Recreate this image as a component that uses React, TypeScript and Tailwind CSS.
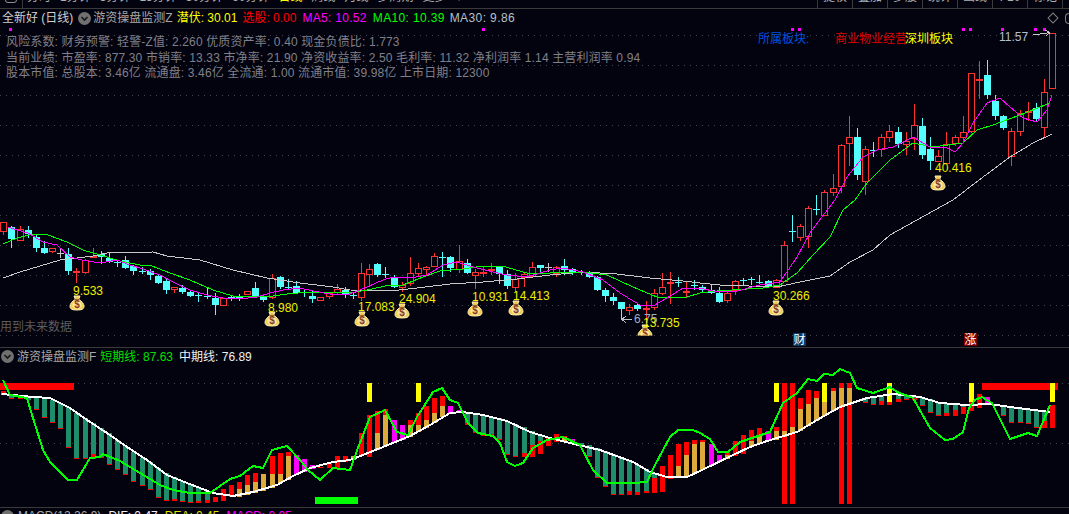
import React from "react"

// candle: [body top, body bottom, high, low, colour]  (page pixels)
type Candle = [number, number, number, number, "r" | "c" | "w"]

const candles: Candle[] = [
  [222, 231, 222, 235, "r"], [227, 239, 226, 248, "c"], [229, 240, 226, 241, "r"], [230, 234, 226, 238, "c"],
  [237, 248, 235, 252, "c"], [248, 253, 241, 254, "c"], [248, 251, 248, 253, "r"], [253, 253, 248, 258, "w"],
  [254, 271, 248, 275, "c"], [271, 271, 268, 283, "r"], [260, 272, 259, 274, "r"], [256, 257, 248, 258, "r"],
  [254, 257, 251, 264, "c"], [258, 262, 253, 263, "c"], [262, 262, 260, 267, "c"], [260, 268, 256, 269, "c"],
  [266, 271, 265, 275, "c"], [271, 271, 267, 274, "c"], [271, 275, 269, 280, "c"], [276, 283, 275, 284, "c"],
  [281, 290, 279, 294, "c"], [287, 289, 287, 293, "r"], [288, 292, 285, 294, "c"], [292, 296, 290, 297, "c"],
  [295, 295, 292, 302, "c"], [296, 296, 287, 299, "c"], [298, 305, 293, 315, "c"], [298, 305, 298, 305, "r"],
  [297, 297, 296, 301, "c"], [297, 298, 294, 301, "c"], [291, 294, 291, 294, "r"], [288, 297, 282, 298, "c"],
  [297, 300, 295, 302, "c"], [278, 297, 274, 299, "r"], [277, 287, 276, 289, "c"], [287, 287, 279, 289, "c"],
  [286, 293, 281, 294, "c"], [292, 292, 289, 297, "c"], [296, 299, 290, 303, "c"], [297, 300, 297, 300, "r"],
  [293, 296, 293, 299, "r"], [289, 292, 284, 295, "r"], [290, 295, 287, 298, "c"], [295, 295, 292, 299, "c"],
  [273, 297, 263, 301, "r"], [269, 274, 264, 287, "r"], [264, 275, 263, 277, "c"], [274, 274, 267, 278, "c"],
  [277, 287, 275, 288, "c"], [285, 287, 282, 292, "r"], [273, 283, 257, 286, "r"], [268, 273, 263, 277, "r"],
  [267, 269, 266, 275, "r"], [256, 266, 253, 267, "r"], [257, 257, 252, 277, "c"], [257, 268, 256, 272, "c"],
  [261, 269, 245, 273, "r"], [263, 273, 259, 274, "c"], [272, 275, 269, 289, "r"], [272, 272, 267, 277, "r"],
  [269, 269, 263, 275, "r"], [267, 274, 266, 284, "c"], [274, 286, 270, 289, "c"], [279, 287, 273, 292, "r"],
  [274, 277, 273, 287, "r"], [267, 276, 262, 277, "r"], [265, 268, 265, 272, "c"], [267, 267, 263, 272, "w"],
  [267, 273, 266, 277, "r"], [266, 270, 259, 275, "c"], [269, 273, 268, 275, "c"], [272, 272, 270, 275, "c"],
  [272, 277, 271, 278, "c"], [277, 290, 276, 291, "c"], [290, 296, 288, 302, "c"], [297, 301, 293, 305, "c"],
  [302, 309, 302, 320, "c"], [307, 310, 304, 315, "r"], [305, 309, 303, 311, "c"], [308, 308, 301, 320, "r"],
  [293, 307, 289, 310, "r"], [287, 293, 273, 295, "r"], [282, 282, 272, 304, "r"], [282, 282, 277, 287, "c"],
  [291, 291, 282, 297, "r"], [285, 285, 280, 290, "c"], [287, 290, 285, 292, "c"], [290, 293, 285, 294, "c"],
  [293, 302, 287, 303, "c"], [293, 300, 291, 303, "r"], [281, 290, 280, 295, "r"], [280, 280, 278, 286, "c"],
  [279, 279, 277, 285, "c"], [282, 282, 275, 284, "c"], [281, 287, 280, 287, "c"], [280, 287, 279, 288, "r"],
  [245, 281, 241, 282, "r"], [231, 231, 215, 242, "c"], [226, 237, 224, 241, "r"], [208, 236, 206, 248, "r"],
  [209, 209, 195, 215, "c"], [192, 215, 190, 216, "r"], [188, 192, 174, 196, "r"], [145, 186, 144, 193, "r"],
  [137, 143, 116, 166, "r"], [137, 175, 128, 180, "c"], [149, 181, 146, 195, "r"], [150, 150, 142, 157, "c"],
  [137, 149, 134, 157, "r"], [131, 137, 125, 142, "r"], [132, 144, 127, 148, "c"], [141, 144, 132, 155, "r"],
  [125, 138, 104, 150, "r"], [126, 155, 118, 159, "c"], [149, 161, 137, 170, "c"], [156, 161, 150, 162, "r"],
  [144, 163, 132, 164, "r"], [137, 143, 135, 146, "r"], [132, 137, 116, 143, "r"], [73, 131, 73, 133, "r"],
  [79, 79, 61, 99, "r"], [75, 95, 60, 99, "c"], [101, 116, 95, 120, "c"], [116, 128, 115, 130, "c"],
  [131, 156, 128, 166, "r"], [113, 131, 110, 136, "r"], [111, 111, 102, 121, "r"], [108, 119, 103, 121, "c"],
  [92, 127, 79, 138, "r"], [33, 88, 33, 88, "r"],
]

// sub chart bars: [top, bottom, colour] segments for each day
type Seg = [number, number, "g" | "r" | "o" | "m" | "y"]

const bars: Seg[][] = [
  [[391, 393, "r"], [393, 395, "o"]], [[395, 398, "g"], [398, 399, "r"]], [[396, 398, "g"], [398, 399, "r"]], [[397, 400, "g"]],
  [[397, 409, "g"], [409, 410, "r"]], [[398, 417, "g"], [417, 418, "r"]], [[400, 422, "g"], [422, 423, "r"]], [[403, 428, "g"], [428, 429, "r"]],
  [[407, 447, "g"], [447, 448, "r"]], [[413, 458, "g"], [458, 459, "r"]], [[418, 458, "g"], [458, 459, "r"]], [[423, 454, "g"], [454, 459, "r"]],
  [[428, 457, "g"], [457, 458, "r"]], [[433, 464, "g"], [464, 465, "r"]], [[440, 469, "g"], [469, 470, "r"]], [[446, 474, "g"], [474, 475, "r"]],
  [[452, 481, "g"], [481, 482, "r"]], [[458, 485, "g"], [485, 486, "r"]], [[462, 489, "g"], [489, 490, "r"]], [[468, 497, "g"], [497, 498, "r"]],
  [[473, 500, "g"], [500, 501, "r"]], [[477, 499, "g"], [499, 501, "r"]], [[481, 501, "g"], [501, 502, "r"]], [[484, 502, "g"], [502, 503, "r"]],
  [[488, 501, "g"], [501, 503, "r"]], [[491, 500, "g"], [500, 503, "r"]], [[497, 502, "r"]], [[489, 501, "r"]],
  [[485, 497, "r"]], [[482, 489, "r"], [489, 497, "o"]], [[475, 485, "r"], [485, 495, "o"]], [[473, 482, "r"], [482, 493, "o"]],
  [[474, 491, "o"]], [[456, 474, "r"], [474, 488, "o"]], [[453, 474, "r"], [474, 483, "o"]], [[452, 456, "r"], [456, 480, "o"]],
  [[455, 475, "m"]], [[459, 472, "m"]], [[465, 469, "m"]], [[467, 468, "r"]],
  [[462, 468, "r"]], [[456, 468, "r"]], [[456, 462, "r"]], [[456, 460, "o"]],
  [[433, 456, "r"]], [[383, 402, "y"], [415, 457, "r"]], [[411, 433, "r"], [433, 450, "o"]], [[409, 415, "r"], [415, 446, "o"]],
  [[420, 443, "m"]], [[425, 440, "m"]], [[420, 425, "r"], [425, 437, "o"]], [[383, 402, "y"], [413, 425, "r"], [425, 432, "o"]],
  [[406, 420, "r"], [420, 428, "o"]], [[398, 413, "r"], [413, 423, "o"]], [[396, 406, "r"], [406, 417, "o"]], [[406, 414, "m"]],
  [[410, 412, "m"]], [[412, 423, "g"], [423, 425, "r"]], [[413, 432, "g"], [432, 433, "r"]], [[416, 435, "g"], [435, 436, "r"]],
  [[417, 434, "g"], [434, 436, "r"]], [[418, 439, "g"], [439, 440, "r"]], [[421, 454, "g"], [454, 455, "r"]], [[424, 456, "g"], [456, 457, "r"]],
  [[427, 453, "g"], [453, 457, "r"]], [[431, 445, "g"], [445, 457, "r"]], [[436, 441, "g"], [441, 454, "r"]], [[437, 446, "r"]],
  [[434, 442, "r"]], [[436, 437, "r"], [437, 442, "o"]], [[439, 443, "m"]], [[443, 446, "g"], [446, 447, "r"]],
  [[445, 456, "g"], [456, 457, "r"]], [[448, 477, "g"], [477, 478, "r"]], [[451, 486, "g"], [486, 487, "r"]], [[454, 494, "g"], [494, 495, "r"]],
  [[457, 494, "g"], [494, 495, "r"]], [[461, 491, "g"], [491, 495, "r"]], [[465, 492, "g"], [492, 495, "r"]], [[469, 491, "g"], [491, 493, "r"]],
  [[473, 478, "g"], [478, 493, "r"]], [[466, 492, "r"]], [[455, 479, "r"]], [[444, 466, "r"], [466, 478, "o"]],
  [[442, 455, "r"], [455, 477, "o"]], [[440, 444, "r"], [444, 474, "o"]], [[440, 442, "r"], [442, 470, "o"]], [[444, 466, "m"]],
  [[455, 462, "m"]], [[453, 455, "r"], [455, 459, "o"]], [[441, 456, "r"]], [[435, 454, "r"]],
  [[430, 441, "r"], [441, 447, "o"]], [[428, 435, "r"], [435, 443, "o"]], [[431, 441, "m"]], [[383, 402, "y"], [427, 431, "r"], [431, 440, "o"]],
  [[383, 431, "r"], [431, 437, "o"], [437, 504, "r"]], [[383, 427, "r"], [427, 434, "o"], [434, 504, "r"]], [[398, 409, "r"], [409, 431, "o"]], [[390, 404, "r"], [404, 426, "o"]],
  [[391, 398, "r"], [398, 421, "o"]], [[383, 402, "y"], [402, 416, "o"]], [[388, 391, "r"], [391, 411, "o"]], [[383, 388, "r"], [388, 406, "o"], [406, 504, "r"]],
  [[383, 388, "r"], [388, 403, "o"], [403, 504, "r"]], [[401, 402, "r"]], [[398, 402, "g"], [402, 403, "r"]], [[396, 404, "g"], [404, 405, "r"]],
  [[395, 401, "g"], [401, 405, "r"]], [[383, 402, "y"], [402, 405, "r"]], [[394, 399, "g"], [399, 402, "r"]], [[395, 399, "g"], [399, 400, "r"]],
  [[396, 398, "g"], [398, 400, "r"]], [[397, 405, "g"], [405, 406, "r"]], [[399, 412, "g"], [412, 413, "r"]], [[402, 415, "g"], [415, 416, "r"]],
  [[404, 413, "g"], [413, 416, "r"]], [[405, 410, "g"], [410, 416, "r"]], [[405, 407, "g"], [407, 414, "r"]], [[383, 402, "y"], [402, 411, "r"]],
  [[394, 408, "r"]], [[397, 405, "m"]], [[404, 405, "m"]], [[405, 415, "g"], [415, 416, "r"]],
  [[408, 422, "g"], [422, 423, "r"]], [[409, 422, "g"], [422, 423, "r"]], [[410, 423, "g"], [423, 424, "r"]], [[411, 427, "g"], [427, 428, "r"]],
  [[412, 421, "g"], [421, 428, "r"]], [[383, 402, "y"], [405, 428, "r"]],
]

const segColor = { g: "#1f8c6a", r: "#ff0000", o: "#dcab3c", m: "#ff00ff", y: "#ffff00" }

const ma5 = "8,227 17,230 28,233 43,242 57,245 70,257 82,260 100,263 117,260 130,265 143,269 160,275 173,282 190,290 207,295 223,298 240,299 257,297 270,293 283,290 300,288 313,291 330,294 347,295 360,290 383,280 393,277 410,278 427,275 443,265 457,262 473,267 493,272 507,275 527,277 550,270 563,268 583,272 603,280 620,293 640,305 653,306 667,298 683,288 700,288 717,292 737,291 760,285 780,282 797,257 810,233 825,213 835,200 847,177 863,157 877,150 893,147 913,137 930,147 947,148 955,152 963,143 973,123 987,103 1000,98 1010,107 1023,118 1037,122 1047,110 1052,95"
const ma10 = "3,244 17,238 33,234 48,235 67,242 83,250 100,255 120,261 140,265 152,266 170,273 190,280 213,290 233,296 253,297 273,296 287,294 310,292 333,292 350,293 367,290 390,285 403,285 423,277 440,271 463,269 482,266 502,266 527,273 550,273 583,272 607,275 633,287 657,297 687,297 700,293 717,291 763,288 780,285 797,273 813,255 830,237 843,210 855,200 867,183 890,160 913,143 933,147 963,143 977,130 993,125 1020,115 1050,103"
const ma30 = "3,278 20,272 40,266 60,260 77,258 93,256 107,253 153,252 167,256 200,260 233,270 267,278 300,283 333,287 350,290 390,291 417,288 450,284 483,282 517,279 550,275 583,272 617,274 650,278 683,281 700,283 720,285 777,287 800,282 830,276 850,262 873,250 890,235 917,220 953,200 983,177 1010,157 1033,143 1052,134"
const whiteLine = "2,394 33,397 50,398 70,408 87,420 107,433 127,447 147,460 167,475 187,483 213,493 233,496 253,492 277,485 293,476 310,468 333,462 350,460 383,447 410,436 430,425 450,413 463,412 483,415 507,421 530,432 550,438 570,443 600,450 633,462 650,472 667,477 687,477 700,471 733,455 750,447 767,441 797,432 817,420 840,407 867,398 893,394 920,397 940,403 967,405 990,404 1010,407 1050,412"
const greenLine = "3,380 10,395 27,398 33,418 43,450 50,462 68,480 77,480 90,458 100,457 103,454 120,461 140,473 160,485 173,490 190,493 210,493 230,479 240,476 253,466 263,468 272,450 287,446 300,460 308,470 320,480 333,468 350,470 358,448 370,417 385,410 397,432 408,435 417,417 433,392 442,388 450,400 458,403 468,423 478,433 493,436 500,443 507,462 515,466 523,463 533,448 547,440 563,437 580,445 593,470 607,483 633,483 647,482 655,465 670,437 678,430 693,430 700,433 710,439 718,452 728,452 740,442 770,432 783,403 797,393 808,379 817,381 824,374 833,375 840,369 850,373 857,388 873,393 890,387 897,392 913,398 930,428 945,440 953,439 963,432 969,408 975,400 982,397 992,403 1010,439 1028,433 1037,436 1050,405"

const priceLabels = [
  { t: "9.533", x: 73, y: 291 }, { t: "8.980", x: 268, y: 308 }, { t: "17.083", x: 358, y: 307 },
  { t: "24.904", x: 399, y: 299 }, { t: "10.931", x: 472, y: 297 }, { t: "14.413", x: 513, y: 296 },
  { t: "30.266", x: 773, y: 296 }, { t: "40.416", x: 935, y: 168 },
]
const bagSpots = [[77, 303], [272, 319], [362, 319], [402, 311], [475, 309], [516, 308], [776, 308], [938, 183]]
const dots = [10, 483, 792, 799, 963, 970, 1002, 1035, 1044]
const mainGrid = [35, 65, 95, 125, 155, 185, 215, 245, 275, 305, 335]
const toolLeft = ["分时", "1分钟", "5分钟", "15分钟", "30分钟", "60分钟", "日线", "周线", "月线", "多周期", "更多"]
const toolRight = ["提权", "叠加", "多股", "统计", "画线", "F10", "标记"]

const xAt = (k: number) => Math.round(3.3 + 8.13 * k)

function MoneyBag({ x, y }: { x: number; y: number }) {
  return (
    <g transform={`translate(${x} ${y})`}>
      <path d="M-3 -7 L3 -7 L1.6 -3.6 C5 -2 7 1 7 3.4 C7 6.4 4 7 0 7 C-4 7 -7 6.4 -7 3.4 C-7 1 -5 -2 -1.6 -3.6 Z" fill="#f3cc4c" stroke="#fff3c0" strokeWidth="1" />
      <ellipse cx="0" cy="2.2" rx="4.6" ry="4" fill="#fdeaa0" />
      <path d="M-2 -3.6 L2 -3.6" stroke="#8a5a20" strokeWidth="1" />
      <text x="0" y="5.4" textAnchor="middle" fontSize="10" fontWeight="700" fill="#8a3a20">$</text>
    </g>
  )
}

function Chevron() {
  return (
    <svg width="13" height="13" viewBox="0 0 13 13" className="shrink-0">
      <circle cx="6.5" cy="6.5" r="6.5" fill="#707070" />
      <path d="M3.5 5 L6.5 8 L9.5 5" fill="none" stroke="#16161c" strokeWidth="1.6" />
    </svg>
  )
}

function Grid({ rows }: { rows: number[] }) {
  return (
    <>
      {rows.map((y) => (
        <line key={y} x1="0" x2="1069" y1={y + 0.5} y2={y + 0.5} stroke="#44444c" strokeDasharray="1 5" />
      ))}
    </>
  )
}

function MainChart() {
  return (
    <svg viewBox="0 25 1069 322" className="absolute inset-0 h-full w-full">
      <defs>
        <clipPath id="bagClip">
          <rect x="630" y="320" width="30" height="15.5" />
        </clipPath>
      </defs>
      <Grid rows={mainGrid} />
      <g shapeRendering="crispEdges">
        {dots.map((x) => (
          <rect key={x} x={x - 1} y="28" width="3" height="3" fill="#ff00ff" />
        ))}
        {candles.map(([top, bottom, high, low, c], k) => {
          const x = xAt(k)
          const color = c === "r" ? "#ff3232" : c === "c" ? "#54ffff" : "#c8c8c8"
          return (
            <g key={k}>
              <rect x={x} y={high} width="1" height={low - high} fill={color} />
              {top === bottom ? (
                <rect x={x - 3} y={top} width="7" height={c === "r" ? 2 : 1} fill={color} />
              ) : c === "r" ? (
                <rect x={x - 3} y={top + 0.5} width="6" height={bottom - top} fill="#03030f" stroke={color} />
              ) : (
                <rect x={x - 3} y={top} width="7" height={bottom - top} fill={color} />
              )}
            </g>
          )
        })}
        <polyline points={ma30} fill="none" stroke="#c8c8c8" />
        <polyline points={ma10} fill="none" stroke="#00ff00" />
        <polyline points={ma5} fill="none" stroke="#ff00ff" />
        <path d="M621 319.5 H632 M622 319.5 L626 316 M622 319.5 L626 323" stroke="#c0c0c0" fill="none" />
        <path d="M1033 35 L1050 32.5 M1050 32.5 L1045 30 M1050 32.5 L1046 36" stroke="#c8c8c8" fill="none" />
      </g>
      {bagSpots.map(([x, y]) => (
        <MoneyBag key={x} x={x} y={y} />
      ))}
      <g clipPath="url(#bagClip)">
        <MoneyBag x={645} y={332} />
      </g>
      <g fontSize="12">
        {priceLabels.map((p) => (
          <text key={p.t} x={p.x} y={p.y + 4} fill="#eeee00">
            {p.t}
          </text>
        ))}
        <text x="634" y="323" fill="#9db0c8">6.75</text>
        <text x="643" y="327" fill="#eeee00">13.735</text>
        <text x="999" y="41" fill="#b4c0d0">11.57</text>
      </g>
      <g fontSize="12" textAnchor="middle">
        <rect x="793" y="333" width="13" height="13" fill="#0b3a66" />
        <text x="799.5" y="344" fill="#ffffff">财</text>
        <rect x="964" y="333" width="13" height="13" fill="#7a0000" />
        <text x="970.5" y="344" fill="#ffffff">涨</text>
      </g>
    </svg>
  )
}

function SubChart() {
  return (
    <svg viewBox="0 365 1069 142" className="h-[142px] w-full">
      <Grid rows={[383, 443]} />
      <g shapeRendering="crispEdges">
        <rect x="0" y="383" width="74" height="7" fill="#ff0000" />
        <rect x="982" y="383" width="76" height="7" fill="#ff0000" />
        <rect x="315" y="497" width="43" height="7" fill="#00ff00" />
        {bars.map((segs, k) =>
          segs.map(([top, bottom, c]) => (
            <rect key={`${k}-${top}`} x={xAt(k) - 2} y={top} width="5" height={bottom - top} fill={segColor[c]} />
          )),
        )}
        <polyline points={whiteLine} fill="none" stroke="#ffffff" strokeWidth="2" />
        <polyline points={greenLine} fill="none" stroke="#00ff00" strokeWidth="2" />
      </g>
    </svg>
  )
}

export default function App() {
  return (
    <div className="flex h-[514px] w-[1069px] flex-col overflow-hidden bg-[#03030f] text-xs leading-none [font-family:'Liberation_Sans','Noto_Sans_CJK_SC',sans-serif]">
      {/* toolbar, only its lower edge is in view */}
      <div className="flex h-[9px] shrink-0 items-end overflow-hidden border-b border-[#3a3a3a] text-[#b0b0b0]">
        <div className="flex h-[20px] w-[23px] shrink-0 items-end justify-center border-r border-[#3a3a3a] pb-[1px]">
          <div className="mb-[4px] h-[6px] w-[12px] rounded-sm border border-[#909090]" />
        </div>
        <div className="ml-[4px] flex gap-[9px] pb-[5px]">
          {toolLeft.map((t) => (
            <span key={t} className={t === "日线" ? "text-[#ffff00]" : ""}>
              {t}
            </span>
          ))}
          <span>▾</span>
        </div>
        <div className="ml-auto flex">
          {toolRight.map((t) => (
            <div key={t} className="flex h-[20px] w-[35px] items-end justify-center border-l border-[#3a3a3a] pb-[5px]">
              {t}
            </div>
          ))}
          <div className="h-[20px] w-[7px] border-l border-[#3a3a3a]" />
        </div>
      </div>

      {/* price header */}
      <div className="flex h-[16px] shrink-0 items-center whitespace-nowrap pt-[2px]">
        <span className="ml-[2px] text-[#d0d0d0]">全新好 (日线)</span>
        <span className="ml-[5px]"><Chevron /></span>
        <span className="ml-[2px] text-[#a8a8a8]">游资操盘监测Z</span>
        <span className="ml-[4px] text-[#ffff00]">潜伏: 30.01</span>
        <span className="ml-[5px] text-[#ff0000]">选股: 0.00</span>
        <span className="ml-[6px] tracking-[0.3px] text-[#ff00ff]">MA5: 10.52</span>
        <span className="ml-[6px] tracking-[0.35px] text-[#00ff00]">MA10: 10.39</span>
        <span className="ml-[5px] tracking-[0.4px] text-[#b8c0c8]">MA30: 9.86</span>
        <span className="ml-auto flex items-center">
          <span className="mr-[8px] h-[8px] w-[8px] rotate-45 border border-[#808080]" />
          <span className="h-[11px] w-[4px] rounded-l-sm border border-r-0 border-[#808080]" />
        </span>
      </div>

      {/* main chart */}
      <div className="relative h-[322px] shrink-0">
        <MainChart />
        <div className="absolute left-[6px] top-[11px] flex flex-col gap-[3.5px] whitespace-nowrap tracking-[0.14px] text-[#80808a]">
          <span>风险系数: 财务预警: 轻警-Z值: 2.260 优质资产率: 0.40 现金负债比: 1.773</span>
          <span>当前业绩: 市盈率: 877.30 市销率: 13.33 市净率: 21.90 净资收益率: 2.50 毛利率: 11.32 净利润率 1.14 主营利润率 0.94</span>
          <span>股本市值: 总股本: 3.46亿 流通盘: 3.46亿 全流通: 1.00 流通市值: 39.98亿 上市日期: 12300</span>
        </div>
        <span className="absolute left-[758px] top-[8px] text-[#0050e0]">所属板块:</span>
        <span className="absolute left-[835px] top-[8px] text-[#e00000]">商业物业经营</span>
        <span className="absolute left-[905px] top-[8px] text-[#ffff00]">深圳板块</span>
        <span className="absolute left-0 top-[296px] text-[#5c5c5c]">用到未来数据</span>
      </div>

      <div className="h-px shrink-0 bg-[#3a3a3a]" />

      {/* oscillator */}
      <div className="flex h-[17px] shrink-0 items-center whitespace-nowrap">
        <span className="ml-px"><Chevron /></span>
        <span className="ml-[3px] text-[#a8a8a8]">游资操盘监测F</span>
        <span className="ml-[4px] text-[#00e000]">短期线: 87.63</span>
        <span className="ml-[6px] text-[#f0f0f0]">中期线: 76.89</span>
      </div>
      <SubChart />

      <div className="h-px shrink-0 bg-[#3a3a3a]" />

      {/* next indicator, only its top edge is in view */}
      <div className="flex h-[6px] shrink-0 items-start overflow-hidden whitespace-nowrap pt-[2px]">
        <span className="ml-px"><Chevron /></span>
        <span className="ml-[4px] text-[#a8a8a8]">MACD(12.26.9)</span>
        <span className="ml-[7px] text-[#f0f0f0]">DIF: 0.47</span>
        <span className="ml-[7px] text-[#e0e000]">DEA: 0.45</span>
        <span className="ml-[7px] text-[#ff00ff]">MACD: 0.05</span>
      </div>
    </div>
  )
}
